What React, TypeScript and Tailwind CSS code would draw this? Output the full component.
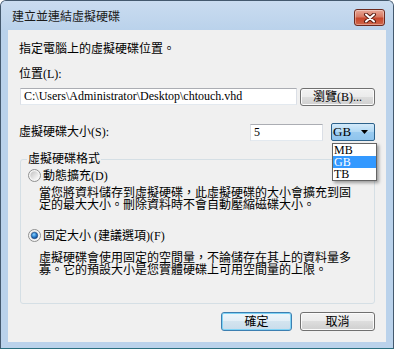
export default function App() {
  return (
    <div className="w-[395px] h-[351px] bg-white text-[12px] text-black font-['Liberation_Serif','Noto_Sans_CJK_TC',serif]">
      {/* window frame */}
      <div className="w-[394px] h-[349px] flex flex-col border border-[#44596e] border-b-[#2a7080] rounded-t-[6px] bg-[#bad2eb]">
        {/* title bar */}
        <div className="h-[29px] shrink-0 flex items-start justify-between pl-[11px] pr-[8px] rounded-t-[5px] bg-gradient-to-b from-[#cadcf0] to-[#bad2eb]">
          <span className="mt-[8px] leading-[16px] text-[#1b1b1b]">建立並連結虛擬硬碟</span>
          <CloseButton />
        </div>

        {/* client area */}
        <div className="mx-[7px] h-[312px] bg-[#f0f0f0] px-[11px] flex flex-col">
          <p className="mt-[11px] leading-[16px]">指定電腦上的虛擬硬碟位置。</p>
          <p className="mt-[9px] leading-[16px]">位置(L):</p>

          <div className="mt-[6px] flex items-start">
            <div className="ml-[1px] w-[277px] h-[17px] bg-white border border-[#abadb3] border-x-[#dbdfe6] border-b-[#e3e9ef] pl-[3px] leading-[15px] whitespace-nowrap overflow-hidden">
              {"C:\\Users\\Administrator\\Desktop\\chtouch.vhd"}
            </div>
            <Button className="ml-[3px] w-[75px]">瀏覽(B)...</Button>
          </div>

          <div className="mt-[17px] flex items-center h-[18px]">
            <span className="flex-1 leading-[16px]">虛擬硬碟大小(S):</span>
            <div className="w-[73px] h-[17px] bg-white border border-[#abadb3] border-x-[#dbdfe6] border-b-[#e3e9ef] pl-[3px] leading-[15px]">
              5
            </div>
            <div className="relative ml-[8px] w-[44px] h-[18px]">
              <div className="h-full flex items-center justify-between pl-[1px] pr-[6px] rounded-[2px] border border-[#2c628b] bg-[linear-gradient(#d4eafa,#b0d8f4_50%,#9acbf0_50%,#8fc4ed)] leading-[16px] text-[13px]">
                <span>GB</span>
                <svg width="7" height="4" viewBox="0 0 7 4">
                  <path d="M0 0h7L3.5 4z" fill="#000" />
                </svg>
              </div>
              {/* open dropdown list */}
              <div className="absolute left-[1px] top-[20px] w-[45px] bg-white border border-[#646464] shadow-[2px_2px_3px_rgba(0,0,0,0.35)] text-[12px] leading-[12px] z-10">
                <div className="h-[12px] pl-[1px] overflow-hidden">MB</div>
                <div className="h-[12px] pl-[1px] overflow-hidden bg-[#3399ff] text-white">GB</div>
                <div className="h-[12px] pl-[1px] overflow-hidden">TB</div>
              </div>
            </div>
          </div>

          {/* format group */}
          <fieldset className="mt-[10px] ml-[1px] w-[355px] border border-[#d5dfe5] rounded-[3px] pl-[7px] pb-[27px]">
            <legend className="-ml-[1px] px-[1px] leading-[16px]">虛擬硬碟格式</legend>

            <div className="mt-[2px] flex items-center h-[13px] gap-[2px]">
              <Radio />
              <span className="leading-[16px]">動態擴充(D)</span>
            </div>
            <div className="mt-[5px] ml-[11px] whitespace-nowrap">
              <div className="h-[12px] leading-[12px]">當您將資料儲存到虛擬硬碟，此虛擬硬碟的大小會擴充到固</div>
              <div className="h-[12px] leading-[12px]">定的最大大小。刪除資料時不會自動壓縮磁碟大小。</div>
            </div>

            <div className="mt-[18px] flex items-center h-[13px] gap-[2px]">
              <Radio checked />
              <span className="leading-[16px]">固定大小 (建議選項)(F)</span>
            </div>
            <div className="mt-[10px] ml-[11px] whitespace-nowrap">
              <div className="h-[12px] leading-[12px]">虛擬硬碟會使用固定的空間量，不論儲存在其上的資料量多</div>
              <div className="h-[12px] leading-[12px]">寡。它的預設大小是您實體硬碟上可用空間量的上限。</div>
            </div>
          </fieldset>

          <div className="mt-[8px] flex justify-end gap-[8px]">
            <button className="w-[71px] h-[19px] rounded-[3px] border border-[#3c7fb1] bg-[linear-gradient(#eef6fb,#e2eef6_50%,#d3e4ef_50%,#c9dceb)] shadow-[inset_0_0_0_1px_#7fd3f5] leading-[16px]">
              確定
            </button>
            <Button className="w-[75px] h-[19px]">取消</Button>
          </div>
        </div>
      </div>
    </div>
  );
}

function Button({ className = "", children }: { className?: string; children: React.ReactNode }) {
  return (
    <button
      className={`h-[18px] rounded-[3px] border border-[#707070] bg-[linear-gradient(#f2f2f2,#ebebeb_50%,#dddddd_50%,#cfcfcf)] shadow-[inset_0_0_0_1px_#fbfbfb] leading-[16px] ${className}`}
    >
      {children}
    </button>
  );
}

function CloseButton() {
  return (
    <div className="mt-[8px] w-[31px] h-[17px] rounded-[3px] border border-[#6d2a1f] bg-[linear-gradient(#e9a796,#d77a64_45%,#c7472c_55%,#d0684c)] shadow-[inset_0_0_0_1px_rgba(255,255,255,0.35)] flex items-center justify-center">
      <svg width="14" height="10" viewBox="0 0 14 10">
        <path d="M3 1.5l8 7M11 1.5l-8 7" stroke="#5a1d12" strokeWidth="4" strokeLinecap="round" />
        <path d="M3 1.5l8 7M11 1.5l-8 7" stroke="#ffffff" strokeWidth="2" strokeLinecap="round" />
      </svg>
    </div>
  );
}

function Radio({ checked }: { checked?: boolean }) {
  const id = checked ? "r-on" : "r-off";
  return (
    <svg width="13" height="13" viewBox="0 0 13 13" className="shrink-0">
      <defs>
        <linearGradient id={`${id}-bg`} x1="0" y1="0" x2="1" y2="1">
          <stop offset="0" stopColor="#c2c2c2" />
          <stop offset="1" stopColor="#ffffff" />
        </linearGradient>
        <radialGradient id={`${id}-dot`} cx="0.4" cy="0.35" r="0.7">
          <stop offset="0" stopColor="#8fd3ff" />
          <stop offset="0.5" stopColor="#2f86d3" />
          <stop offset="1" stopColor="#0b3f86" />
        </radialGradient>
      </defs>
      <circle cx="6.5" cy="6.5" r="6" fill="#f5f5f5" stroke="#8e8f8f" />
      <circle cx="6.5" cy="6.5" r="4.2" fill={`url(#${id}-bg)`} />
      {checked && <circle cx="6.5" cy="6.5" r="3.2" fill={`url(#${id}-dot)`} stroke="#17427a" strokeWidth="0.6" />}
    </svg>
  );
}
